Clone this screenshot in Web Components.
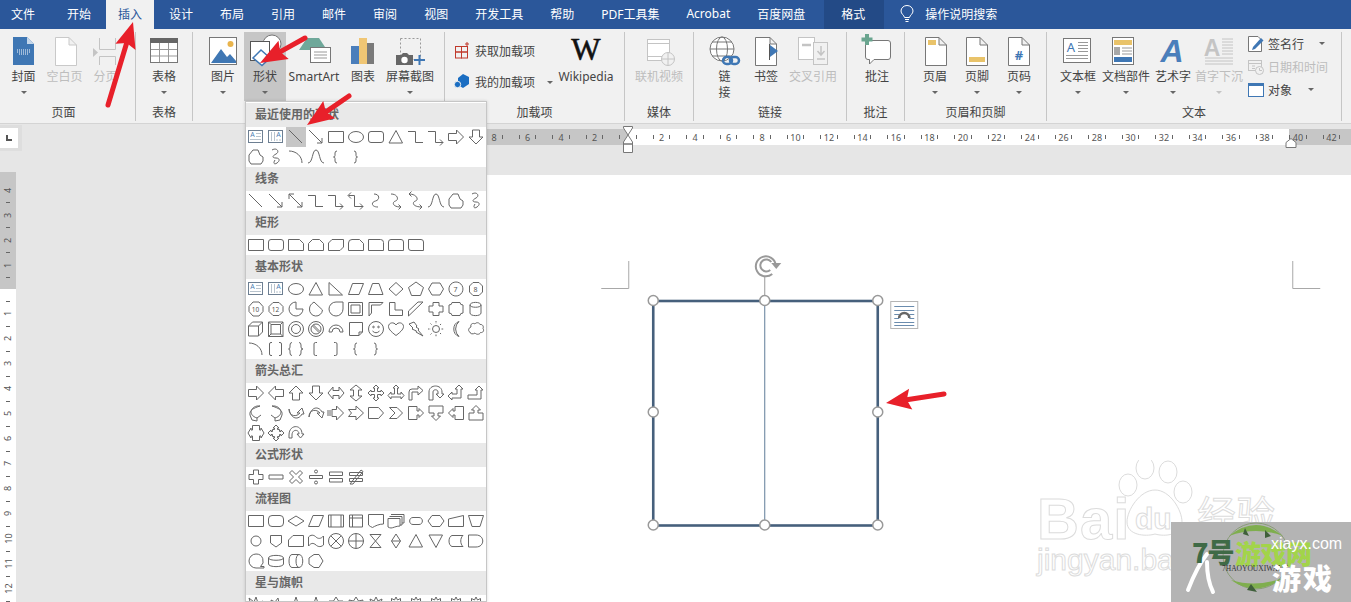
<!DOCTYPE html>
<html lang="zh">
<head>
<meta charset="utf-8">
<title>Word</title>
<style>
  html, body { margin: 0; padding: 0; }
  body { font-family: "Noto Sans", "Noto Sans CJK SC", sans-serif; font-size: 12px; }
</style>
</head>
<body>

<word-app>
  <tab-bar slot="tabs">
    <tab-item style="padding-right:17px;padding-left:11px">文件</tab-item>
    <tab-item>开始</tab-item>
    <tab-item active>插入</tab-item>
    <tab-item>设计</tab-item>
    <tab-item>布局</tab-item>
    <tab-item>引用</tab-item>
    <tab-item>邮件</tab-item>
    <tab-item>审阅</tab-item>
    <tab-item>视图</tab-item>
    <tab-item>开发工具</tab-item>
    <tab-item>帮助</tab-item>
    <tab-item>PDF工具集</tab-item>
    <tab-item>Acrobat</tab-item>
    <tab-item>百度网盘</tab-item>
    <tab-item context>格式</tab-item>
    <tell-me>操作说明搜索</tell-me>
  </tab-bar>

  <ribbon-bar slot="ribbon">
    <ribbon-group label="页面" style="width:136px;--pad:3px;--label-right:8px">
      <ribbon-button icon="cover" arrow style="width:41px">封面</ribbon-button>
      <ribbon-button icon="blank" disabled style="width:41px">空白页</ribbon-button>
      <ribbon-button icon="pagebreak" disabled style="width:41px">分页</ribbon-button>
    </ribbon-group>
    <ribbon-group label="表格" style="width:57px;--pad:6px">
      <ribbon-button icon="table" arrow style="width:44px">表格</ribbon-button>
    </ribbon-group>
    <ribbon-group style="width:252px;--pad:9px">
      <ribbon-button icon="picture" arrow style="width:42px">图片</ribbon-button>
      <ribbon-button icon="shapes" arrow pressed style="width:42px">形状</ribbon-button>
      <ribbon-button icon="smartart" style="width:56px">SmartArt</ribbon-button>
      <ribbon-button icon="chart" style="width:42px">图表</ribbon-button>
      <ribbon-button icon="screenshot" arrow style="width:52px">屏幕截图</ribbon-button>
    </ribbon-group>
    <ribbon-group label="加载项" style="width:180px;--pad:9px">
      <button-stack style="width:99px;gap:11px;padding-top:9px">
        <small-button icon="addin">获取加载项</small-button>
        <small-button icon="myaddin" arrow style="--caret:9px">我的加载项</small-button>
      </button-stack>
      <ribbon-button icon="wiki" style="width:66px">Wikipedia</ribbon-button>
    </ribbon-group>
    <ribbon-group label="媒体" style="width:69px;--pad:7px">
      <ribbon-button icon="video" disabled style="width:54px">联机视频</ribbon-button>
    </ribbon-group>
    <ribbon-group label="链接" style="width:153px;--pad:10px">
      <ribbon-button icon="link" style="width:41px">链<br>接</ribbon-button>
      <ribbon-button icon="bookmark" style="width:42px">书签</ribbon-button>
      <ribbon-button icon="crossref" disabled style="width:52px">交叉引用</ribbon-button>
    </ribbon-group>
    <ribbon-group label="批注" style="width:58px;--pad:8px">
      <ribbon-button icon="comment" style="width:44px">批注</ribbon-button>
    </ribbon-group>
    <ribbon-group label="页眉和页脚" style="width:142px;--pad:9px">
      <ribbon-button icon="header" arrow style="width:42px">页眉</ribbon-button>
      <ribbon-button icon="footer" arrow style="width:42px">页脚</ribbon-button>
      <ribbon-button icon="pagenum" arrow style="width:42px">页码</ribbon-button>
    </ribbon-group>
    <ribbon-group label="文本" style="width:295px;--pad:8px">
      <ribbon-button icon="textbox" arrow style="width:46px">文本框</ribbon-button>
      <ribbon-button icon="docpart" arrow style="width:50px">文档部件</ribbon-button>
      <ribbon-button icon="wordart" arrow style="width:44px">艺术字</ribbon-button>
      <ribbon-button icon="dropcap" arrow disabled style="width:48px">首字下沉</ribbon-button>
      <button-stack style="width:94px;margin-left:4px;gap:0">
        <small-button icon="signature" arrow tall style="--caret:12px">签名行</small-button>
        <small-button icon="datetime" disabled tall>日期和时间</small-button>
        <small-button icon="object" arrow tall style="--caret:13px">对象</small-button>
      </button-stack>
    </ribbon-group>
  </ribbon-bar>

  <doc-workspace slot="workspace"></doc-workspace>

  <shape-menu slot="overlay">
    <shape-section heading="最近使用的形状" selected="2" shapes="txt vtxt line arrow rect ellipse rrect tri elbow elbowA right down free scrib arcq wave lbrace rbrace"></shape-section>
    <shape-section heading="线条" shapes="line arrow dbl elbow elbowA elbowD curve curveA curveD wave free scrib"></shape-section>
    <shape-section heading="矩形" shapes="rect rrect snip1 snip2 snipd rsnip round1 round2 rounddiag"></shape-section>
    <shape-section heading="基本形状" shapes="txt vtxt ellipse tri rtri para trap diamond penta hexa n7 n8 n10 n12 pie tear teardrop frame halfframe lshape stripe cross plaque can cube bevel donut nosym blockarc fold smile heart bolt sun moon cloud arcq bracketp bracep lbrack rbrack lbrace rbrace"></shape-section>
    <shape-section heading="箭头总汇" shapes="right left up down lr ud quad lru bent uturn leftup bentup curveR curveL curveU curveDn striped notched home chevron calloutR calloutD calloutL calloutU calloutLR calloutQ circular"></shape-section>
    <shape-section heading="公式形状" shapes="plus minus times divide equal noteq"></shape-section>
    <shape-section heading="流程图" shapes="rect alt decision data predef internal doc multidoc term prep minput mop conn offpage card tape sumj orj collate sort extract merge stored delay seq disk direct display"></shape-section>
    <shape-section heading="星与旗帜" shapes="burst1 burst2 star4 star5 star6 star7 star8 star10 star12 star16 star24 star32"></shape-section>
  </shape-menu>

  <baidu-mark slot="overlay"></baidu-mark>
  <site-badge slot="overlay"></site-badge>
  <red-arrows slot="overlay"></red-arrows>
</word-app>

<script>
// ribbon icons, 42x34 box, centre of the button is x=21
const ICONS = {
  cover: `<path d="M10 5H24L31 12V33H10Z" fill="#3f77b4"/><path d="M24 5V12H31Z" fill="#c5d7ea"/><path d="M14 18H27M14 20H27M16 22H25" stroke="#fff" stroke-dasharray="1 1"/>`,
  blank: `<path d="M11.500 5.500H25L32.500 13V33.500H11.500ZM25 5.500V13H32.500" fill="#fff" stroke="#c9c9c9"/>`,
  pagebreak: `<g fill="none" stroke="#c4c4c4"><path d="M14.500 6V17.500H30.500V6M14.500 33V24.500H30.500V33"/></g><path d="M8 16L13 20.500L8 25Z" fill="#c4c4c4"/>`,
  table: `<rect x="7.500" y="6.500" width="27" height="24" fill="#fff" stroke="#777"/><rect x="7" y="6" width="28" height="5" fill="#666"/><path d="M16.500 11V30M25.500 11V30M8 17.500H34M8 24H34" stroke="#999" fill="none"/>`,
  picture: `<rect x="7.500" y="5.500" width="27" height="27" fill="#fff" stroke="#777"/><circle cx="28.500" cy="12" r="3" fill="#e9b44c"/><path d="M9 31L19 17L25 25L28 22L34 29V31Z" fill="#3f77b4"/>`,
  shapes: `<circle cx="28" cy="12" r="9" fill="#fff" stroke="#777"/><rect x="6.500" y="9.500" width="19" height="19" fill="#fff" stroke="#555"/><path d="M17 18L26 26L18 33.500L9 26Z" fill="#fff" stroke="#3f77b4" stroke-width="1.500"/>`,
  smartart: `<path d="M14 6H26L34 18H6Z" fill="#6fa89a"/><rect x="17.500" y="15.500" width="20" height="15" fill="#fff" stroke="#777"/><path d="M21 20H34M21 23H34M21 26H34" stroke="#999"/>`,
  chart: `<rect x="9" y="14" width="8" height="18" fill="#4a7ebb"/><rect x="17" y="6" width="8" height="26" fill="#f0c674"/><rect x="25" y="11" width="7" height="21" fill="#7a7a7a"/>`,
  screenshot: `<rect x="11.500" y="6.500" width="20" height="21" fill="none" stroke="#999" stroke-dasharray="2 2"/><path d="M7 23H12L14 21H18L20 23H24V33H7Z" fill="#666"/><circle cx="15.500" cy="28" r="3.200" fill="#fff"/><path d="M25 28H36M30.500 23V33" stroke="#3f77b4" stroke-width="2"/>`,
  wiki: `<text x="21" y="28" text-anchor="middle" font-family="Liberation Serif" font-size="31" font-weight="400" fill="#111" stroke="#111" stroke-width=".6">W</text>`,
  video: `<rect x="9.500" y="7.500" width="22" height="21" fill="#fff" stroke="#c4c4c4"/><path d="M9.500 11.500H31.500M9.500 24.500H31.500" stroke="#c4c4c4"/><circle cx="30" cy="27" r="6.500" fill="#f1f1f1" stroke="#c4c4c4"/><path d="M23.500 27H36.500M30 20.500V33.500" stroke="#c4c4c4"/>`,
  link: `<circle cx="18" cy="17" r="12" fill="#fff" stroke="#777"/><ellipse cx="18" cy="17" rx="5.500" ry="12" fill="none" stroke="#777"/><path d="M6 17H30M8 10H28M8 24H28" stroke="#777"/><rect x="19" y="25" width="9" height="7" rx="3.500" fill="none" stroke="#3f77b4" stroke-width="2.500"/><rect x="26" y="25" width="9" height="7" rx="3.500" fill="none" stroke="#3f77b4" stroke-width="2.500"/>`,
  bookmark: `<path d="M10.500 5.500H25L31.500 12V33.500H10.500ZM25 5.500V12H31.500" fill="#fff" stroke="#777"/><path d="M24.500 12V28" stroke="#555"/><path d="M25 13L33 19L25 25Z" fill="#3f77b4"/>`,
  crossref: `<rect x="6.500" y="5.500" width="16" height="22" fill="#fff" stroke="#c4c4c4"/><path d="M10 13H19" stroke="#c4c4c4" stroke-width="2.500"/><rect x="21.500" y="10.500" width="14" height="22" fill="#f1f1f1" stroke="#c4c4c4"/><path d="M29 14V22M25.500 19L29 23L32.500 19M25 27H33" stroke="#c4c4c4" stroke-width="1.500" fill="none"/>`,
  comment: `<path d="M9.500 8.500H32Q34.500 8.500 34.500 11V25Q34.500 27.500 32 27.500H18L13.500 32V27.500H12Q9.500 27.500 9.500 25Z" fill="#fff" stroke="#777"/><path d="M11 2V13M5.500 7.500H16.500" stroke="#6aa58f" stroke-width="4"/>`,
  header: `<path d="M11.500 5.500H25L32.500 13V33.500H11.500ZM25 5.500V13H32.500" fill="#fff" stroke="#777"/><rect x="14" y="8" width="8" height="5" fill="#e9c36a"/>`,
  footer: `<path d="M10.500 5.500H24L31.500 13V33.500H10.500ZM24 5.500V13H31.500" fill="#fff" stroke="#777"/><rect x="13" y="25" width="16" height="5" fill="#e9c36a"/>`,
  pagenum: `<path d="M10.500 5.500H24L31.500 13V33.500H10.500ZM24 5.500V13H31.500" fill="#fff" stroke="#777"/><text x="21" y="28" text-anchor="middle" font-size="13" font-weight="700" fill="#3f77b4">#</text>`,
  textbox: `<rect x="6.500" y="6.500" width="27" height="24" fill="#fff" stroke="#777"/><text x="14" y="20" text-anchor="middle" font-size="13" fill="#3f77b4">A</text><path d="M21 10.500H31M21 13.500H31M21 16.500H31M21 19.500H31M9 23.500H31M9 26.500H31" stroke="#999"/>`,
  docpart: `<rect x="7.500" y="5.500" width="21" height="27" fill="#fff" stroke="#777"/><rect x="9" y="8" width="18" height="5" fill="#e9c36a"/><rect x="9" y="15" width="6" height="8" fill="#a8a8a8"/><path d="M17 16H27M17 19H27M17 22H27" stroke="#999"/><rect x="9" y="25" width="18" height="5" fill="#3f77b4"/>`,
  wordart: `<text x="20" y="30" text-anchor="middle" font-family="Liberation Sans" font-style="italic" font-weight="700" font-size="32" fill="#4a7ebb">A</text>`,
  dropcap: `<text x="14" y="24" text-anchor="middle" font-family="Liberation Sans" font-weight="700" font-size="23" fill="#c4c4c4">A</text><path d="M24 7H35M24 10H35M24 13H35M24 16H35M24 19H35M24 22H35M7 26H35M7 29H35M7 32H35" stroke="#c4c4c4"/>`,
  addin: `<g fill="none" stroke="#c0392b"><rect x="1.500" y="4.500" width="6" height="5.500"/><rect x="7.500" y="4.500" width="6" height="5.500"/><rect x="1.500" y="10" width="6" height="6"/><rect x="7.500" y="10" width="6" height="6"/><path d="M13 0V4M11 2H15"/></g>`,
  myaddin: `<path d="M9 1L15 4V11L9 15L4 12V5Z" fill="#1b6ec2"/><circle cx="3.500" cy="11.500" r="3.200" fill="#1b6ec2" stroke="#f1f1f1"/>`,
  signature: `<path d="M1.500 1.500H11L14.500 5V16.500H1.500Z" fill="#fff" stroke="#777"/><path d="M6 12L14 3L16.500 5.500L8 14L5 15Z" fill="#3f77b4"/>`,
  datetime: `<rect x="1.500" y="2.500" width="13" height="10" fill="#f1f1f1" stroke="#c4c4c4"/><path d="M1.500 5.500H14.500M5 8H8M5 10.500H8" stroke="#c4c4c4"/><circle cx="12.500" cy="12.500" r="4" fill="#f1f1f1" stroke="#c4c4c4"/><path d="M12.500 10V12.500H15" fill="none" stroke="#c4c4c4"/>`,
  object: `<rect x="1.500" y="2.500" width="15" height="13" fill="#fff" stroke="#3f77b4"/><rect x="1" y="2" width="16" height="3" fill="#3f77b4"/>`
};

// shape gallery, 20x20 box. a string starting with < is raw svg, anything else a path
const num = (d, n) => `<path d="${d}"/><text x="9.500" y="12.500" text-anchor="middle" font-size="${n > 9 ? 6.500 : 7}" stroke="none" fill="#555">${n}</text>`;
const SHAPES = {
  txt: `<rect x="2.500" y="3.500" width="14" height="12" stroke="#6d7f92"/><text x="6.500" y="10" text-anchor="middle" font-size="7" stroke="none" fill="#4f7fb4">A</text><path d="M10 6.500H15M10 9.500H15M4 12.500H15" stroke="#9aa9b8" stroke-width=".7"/>`,
  vtxt: `<rect x="2.500" y="3.500" width="14" height="12" stroke="#6d7f92"/><text x="12.500" y="10" text-anchor="middle" font-size="7" stroke="none" fill="#4f7fb4">A</text><path d="M5.500 5V14M8.500 5V14M11 12V14M14 12V14" stroke="#9aa9b8" stroke-width=".7"/>`,
  line: 'M3 3L16 16',
  arrow: 'M3 3L16 16M16 11V16H11',
  dbl: 'M3 3L16 16M16 11V16H11M3 8V3H8',
  elbow: 'M2 4.500H9.500V15.500H17',
  elbowA: 'M2 4.500H9.500V15.500H17M14 12.500L17 15.500L14 18.500',
  elbowD: 'M2.500 4.500H8.500V15.500H17M5 1.500L2 4.500L5 7.500M14 12.500L17 15.500L14 18.500',
  curve: 'M8 3C14 3 14 9 9.500 10C5 11 5 16 12 16',
  curveA: 'M5 3C12 3 13 9 9.500 10C6 11 6 16 15 16M12.500 13.500L15 16L12.500 18.500',
  curveD: 'M3 3C11 3 13 9 9.500 10C6 11 6 16 16 16M5.500 .500L3 3L5.500 5.500M13.500 13.500L16 16L13.500 18.500',
  wave: 'M2 16C7 16 6 3 10 3S13 16 18 16',
  free: 'M3 8L7 3H12L14 8L17 10V14L15 17H5L3 14Z',
  scrib: 'M6 3C11 0 14 5 10 7S6 11 10 11 14 14 11 16 7 16 9 13',
  rect: 'M2.500 4.500H17.500V15.500H2.500Z',
  ellipse: `<ellipse cx="10" cy="10" rx="7.500" ry="5.500"/>`,
  rrect: 'M5 4.500H15Q17.500 4.500 17.500 7V13Q17.500 15.500 15 15.500H5Q2.500 15.500 2.500 13V7Q2.500 4.500 5 4.500Z',
  snip1: 'M2.500 4.500H13.500L17.500 8.500V15.500H2.500Z',
  snip2: 'M6.500 4.500H13.500L17.500 8.500V15.500H2.500V8.500Z',
  snipd: 'M6 4.500H17.500V12L14 15.500H2.500V8Z',
  rsnip: 'M6 4.500H13.500L17.500 8.500V15.500H2.500V8Q2.500 4.500 6 4.500Z',
  round1: 'M2.500 4.500H14.500Q17.500 4.500 17.500 7.500V15.500H2.500Z',
  round2: 'M5 4.500H15Q17.500 4.500 17.500 7V15.500H2.500V7Q2.500 4.500 5 4.500Z',
  rounddiag: 'M2.500 4.500H15Q17.500 4.500 17.500 7V15.500H5Q2.500 15.500 2.500 13Z',
  tri: 'M10 3.500L16.500 16H3Z',
  rtri: 'M3 3.500V16H16.500Z',
  para: 'M6.500 4.500H17.500L13 15.500H2.500Z',
  trap: 'M6.500 4.500H13L17 15.500H2.500Z',
  diamond: 'M10 3.500L17 10L10 16.500L3 10Z',
  penta: 'M10 3L17.500 8.500L14.500 16.500H5.500L2.500 8.500Z',
  hexa: 'M6 4H14L17.500 10L14 16H6L2.500 10Z',
  n7: num('M10 3A7 7 0 1 1 9.900 3Z', 7),
  n8: num('M7 3.500H13L16.500 7V13L13 16.500H7L3.500 13V7Z', 8),
  n10: num('M7 3H13L17 7.500V12.500L13 17H7L3 12.500V7.500Z', 10),
  n12: num('M7 3.500H13L17 7.500V12.500L13 16.500H7L3 12.500V7.500Z', 12),
  pie: 'M10 3A7 7 0 1 0 17 10H10Z',
  tear: 'M8 3L16.500 11A6.500 6.500 0 1 1 3.500 10C3.500 7 5 5 8 3Z',
  teardrop: 'M17 3V10A7 7 0 1 1 10 3Z',
  frame: 'M2.500 3.500H16.500V16.500H2.500ZM5 6H14V14H5Z',
  halfframe: 'M3 3.500H17L14.500 6H5.500V14L3 17Z',
  lshape: 'M3.500 3.500H9V11H16.500V16.500H3.500Z',
  stripe: 'M2.500 12L12 3H17L2.500 17Z',
  cross: 'M7 3.500H13V7H17V13H13V16.500H7V13H3V7H7Z',
  plaque: 'M6 3.500H14Q14 6 17 6V14Q14 14 14 16.500H6Q6 14 3 14V6Q6 6 6 3.500Z',
  can: 'M4 6C4 2.500 15 2.500 15 6V14C15 17.500 4 17.500 4 14ZM4 6C4 9 15 9 15 6',
  cube: 'M2.500 7L6.500 3H16.500V13L12.500 17H2.500ZM2.500 7H12.500V17M12.500 7L16.500 3',
  bevel: 'M2.500 3H17V17.500H2.500ZM5 5.500H14.500V15H5ZM2.500 3L5 5.500M17 3L14.500 5.500M2.500 17.500L5 15M17 17.500L14.500 15',
  donut: `<circle cx="10" cy="10" r="7.500"/><circle cx="10" cy="10" r="4.500"/>`,
  nosym: `<circle cx="10" cy="10" r="7.500"/><circle cx="10" cy="10" r="5"/><path d="M6.500 7L13 13.500M7.500 6L14 12.500"/>`,
  blockarc: 'M3 13A7 7 0 0 1 17 13H14A4 4 0 0 0 6 13Z',
  fold: 'M3.500 3.500H16.500V13L13 16.500H3.500ZM13 16.500V13H16.500',
  smile: `<circle cx="10" cy="10" r="7.500"/><circle cx="7.500" cy="8" r=".8"/><circle cx="12.500" cy="8" r=".8"/><path d="M6.500 12Q10 15.500 13.500 12"/>`,
  heart: 'M10 16.500C4 12 2.500 9.500 2.500 7.500C2.500 3.500 8 2.500 10 6C12 2.500 17.500 3.500 17.500 7.500C17.500 9.500 16 12 10 16.500Z',
  bolt: 'M3 5L8 3L11 7L10 8L13 10L12 11L17 17L10 13L10.500 12L6 10L7 9Z',
  sun: `<circle cx="10" cy="10" r="3.500"/><path d="M10 2V4.500M10 15.500V18M2 10H4.500M15.500 10H18M4.500 4.500L6 6M14 14L15.500 15.500M4.500 15.500L6 14M14 6L15.500 4.500" stroke-dasharray="1.500 .8"/>`,
  moon: 'M13 2.500A8 8 0 0 0 13 17.500A10 10 0 0 1 13 2.500Z',
  cloud: 'M5 8C4 5 7 3.500 9 5C10 3 13.500 3.500 14 5.500C16.500 5 18 7.500 17 9.500C18.500 11.500 17 14 14.500 13.500C13.500 16 10 15.500 9 14C7 15.500 4 15 4 13C2 12.500 2 9 5 8Z',
  arcq: 'M3 4C10 4 16 9 16 16',
  bracketp: 'M6 3.500H5Q3.500 3.500 3.500 5V15Q3.500 16.500 5 16.500H6M13 3.500H14Q15.500 3.500 15.500 5V15Q15.500 16.500 14 16.500H13',
  bracep: 'M6 3.500Q4 3.500 4 6V8Q4 10 2.500 10Q4 10 4 12V14Q4 16.500 6 16.500M13 3.500Q15 3.500 15 6V8Q15 10 17 10Q15 10 15 12V14Q15 16.500 13 16.500',
  lbrack: 'M11 3.500H9.500Q8 3.500 8 5V15Q8 16.500 9.500 16.500H11',
  rbrack: 'M8 3.500H9.500Q11 3.500 11 5V15Q11 16.500 9.500 16.500H8',
  lbrace: 'M11 4Q9 4 9 6V8.500Q9 10 7.500 10Q9 10 9 11.500V14Q9 16 11 16',
  rbrace: 'M8 4Q10 4 10 6V8.500Q10 10 11.500 10Q10 10 10 11.500V14Q10 16 8 16',
  right: 'M2.500 6.500H10.500V3L17.500 10L10.500 17V13.500H2.500Z',
  left: 'M17.500 6.500H9.500V3L2.500 10L9.500 17V13.500H17.500Z',
  up: 'M6.500 17V10H3L10 3L17 10H13.500V17Z',
  down: 'M6.500 3V10H3L10 17L17 10H13.500V3Z',
  lr: 'M2 10L7 4V7.500H13V4L18 10L13 16V12.500H7V16Z',
  ud: 'M10 2L16 7H12.500V13H16L10 18L4 13H7.500V7H4Z',
  quad: 'M10 2L13 5H11.500V8.500H15V7L18 10L15 13V11.500H11.500V15H13L10 18L7 15H8.500V11.500H5V13L2 10L5 7V8.500H8.500V5H7Z',
  lru: 'M10 2L13 5H11.500V11H15V9L18 12.500L15 16V14H5V16L2 12.500L5 9V11H8.500V5H7Z',
  bent: 'M3 17V9Q3 6 6 6H12V3L17 7.500L12 12V9H6V17Z',
  uturn: 'M3 17V9C3 1 16 1 16 9V11H18L14 15L10 11H12V9C12 6 7 6 7 9V17Z',
  leftup: 'M2 13L6 9V11H11V6H9L13 2L17 6H15V15H6V17Z',
  bentup: 'M2 12H11V7H9L13 3L17 7H15V16H2Z',
  curveR: 'M14 3C5 2 1 12 11 15V18L6 17L4 12C3 7 8 5 14 3ZM11 15L15 12',
  curveL: 'M6 3C15 2 19 12 9 15V18L14 17L16 12C17 7 12 5 6 3ZM9 15L5 12',
  curveU: 'M3 6C3 14 11 14 14 10H11L16 5L18 11L16 11C13 17 5 17 3 6Z',
  curveDn: 'M3 14C3 6 11 6 14 10H11L16 15L18 9L16 9C13 3 5 3 3 14Z',
  striped: 'M2 7V13M4 7V13M6 6.500H10.500V3L17.500 10L10.500 17V13.500H6Z',
  notched: 'M2.500 6.500H10V3L17.500 10L10 17V13.500H2.500L5.500 10Z',
  home: 'M2.500 4.500H12.500L17.500 10L12.500 15.500H2.500Z',
  chevron: 'M3.500 4.500H11L16.500 10L11 15.500H3.500L9 10Z',
  calloutR: 'M2.500 3.500H11V8H13V5.500L17.500 10L13 14.500V12H11V16.500H2.500Z',
  calloutD: 'M3 3H17V10H12V13H14.500L10 17.500L5.500 13H8V10H3Z',
  calloutL: 'M17.500 3.500H9V8H7V5.500L2.500 10L7 14.500V12H9V16.500H17.500Z',
  calloutU: 'M3 17H17V10H12V7H14.500L10 2.500L5.500 7H8V10H3Z',
  calloutLR: 'M6.500 2.500H13.500V7H15V5L18 10L15 15V13H13.500V17.500H6.500V13H5V15L2 10L5 5V7H6.500Z',
  calloutQ: 'M10 2L13 5H11.500V6.500H13.500V8.500H15V7L18 10L15 13V11.500H13.500V13.500H11.500V15H13L10 18L7 15H8.500V13.500H6.500V11.500H5V13L2 10L5 7V8.500H6.500V6.500H8.500V5H7Z',
  circular: 'M3 12C3 1 16 1 16 11H18L14.500 15L11 11H13C13 6 6 6 6 12V15H3Z',
  plus: 'M7.500 3H12.500V7.500H17V12.500H12.500V17H7.500V12.500H3V7.500H7.500Z',
  minus: 'M3 8H17V12H3Z',
  times: 'M6 3.500L10 7.500L14 3.500L16.500 6L12.500 10L16.500 14L14 16.500L10 12.500L6 16.500L3.500 14L7.500 10L3.500 6Z',
  divide: `<circle cx="10" cy="4.500" r="1.500"/><circle cx="10" cy="15.500" r="1.500"/><path d="M3.500 8.500H16.500V11.500H3.500Z"/>`,
  equal: 'M3.500 5H16.500V8.500H3.500ZM3.500 11.500H16.500V15H3.500Z',
  noteq: 'M3.500 5.500H16.500V8.500H3.500ZM3.500 11.500H16.500V14.500H3.500ZM4 17L15 3L17 4.500L7 17Z',
  alt: 'M6 4.500H14Q17.500 4.500 17.500 8V12Q17.500 15.500 14 15.500H6Q2.500 15.500 2.500 12V8Q2.500 4.500 6 4.500Z',
  decision: 'M10 5L18 10L10 15L2 10Z',
  data: 'M7 4.500H17.500L13 15.500H2.500Z',
  predef: 'M2.500 4H17.500V16H2.500ZM5 4V16M15 4V16',
  internal: 'M3.500 4H16.500V16H3.500ZM6.500 4V16M3.500 7H16.500',
  doc: 'M2.500 3.500H17.500V13C13 13 9 15 6.500 16.500C5 16 3.500 15 2.500 14Z',
  multidoc: 'M5 3.500H18V12H16M3.500 5.500H16V14H14M2 7.500H14V15C10 15 7 17 5 17C4 17 3 16.500 2 16Z',
  term: 'M7 6.500H13C17.500 6.500 17.500 13.500 13 13.500H7C2.500 13.500 2.500 6.500 7 6.500Z',
  prep: 'M6 4.500H14L18 10L14 15.500H6L2 10Z',
  minput: 'M2.500 8L17.500 4.500V15.500H2.500Z',
  mop: 'M2.500 4.500H17.500L14 15.500H6Z',
  conn: `<circle cx="10" cy="10" r="5"/>`,
  offpage: 'M4.500 4.500H15.500V12L10 16L4.500 12Z',
  card: 'M7 4.500H17.500V15.500H2.500V9Z',
  tape: 'M2.500 6C6 2.500 9 5 10 6C12 8 15 8 17.500 5V14C14 17 11 15 10 14C7 11.500 5 12 2.500 15Z',
  sumj: `<circle cx="10" cy="10" r="7.500"/><path d="M4.700 4.700L15.300 15.300M15.300 4.700L4.700 15.300"/>`,
  orj: `<circle cx="10" cy="10" r="7.500"/><path d="M2.500 10H17.500M10 2.500V17.500"/>`,
  collate: 'M4 3.500H15L4 16.500H15Z',
  sort: 'M10 3L14.500 10L10 17L5.500 10ZM5.500 10H14.500',
  extract: 'M10 3.500L16.500 16H3Z',
  merge: 'M3 4H16.500L10 16.500Z',
  stored: 'M6 4.500H17C14 7 14 13 17 15.500H6C2 14.500 2 5.500 6 4.500Z',
  delay: 'M2.500 4H10C19 4 19 16 10 16H2.500Z',
  seq: 'M10 3A7 7 0 1 0 10 17H18V15.500H14.500A7 7 0 0 0 10 3Z',
  disk: 'M2.500 7C2.500 3.500 17.500 3.500 17.500 7V13C17.500 16.500 2.500 16.500 2.500 13ZM2.500 7C2.500 10 17.500 10 17.500 7',
  direct: 'M6 3.500H13C18 3.500 18 16.500 13 16.500H6C2 16.500 2 3.500 6 3.500ZM13 3.500C9 3.500 9 16.500 13 16.500',
  display: 'M8 3.500H13L17 10L13 16.500H8L3 13V7Z',
  burst1: 'M3 3L8 7L10 2L12 8L17 6L14 11L18 15L12 15L10 20L7 15L3 16L5 10Z',
  burst2: 'M5 5L9 7L12 3L13 8L18 8L14 12L17 18L11 15L7 19L7 14L2 12L6 9Z',
  star4: 'M10 2L12 8L18 10L12 12L10 18L8 12L2 10L8 8Z',
  star5: 'M10 2L12 8H18L13 12L15 18L10 14L5 18L7 12L2 8H8Z',
  star6: 'M10 2L12.500 6H17L14.500 10L17 14H12.500L10 18L7.500 14H3L5.500 10L3 6H7.500Z',
  star7: 'M10 2L12.500 6L17 5L15.500 10L18 14L13 14L10 18L7 14L2 14L4.500 10L3 5L7.500 6Z',
  star8: 'M10 2L12 6L16 4L15 8L18 10L15 12L16 16L12 14L10 18L8 14L4 16L5 12L2 10L5 8L4 4L8 6Z',
  star10: 'M10 2L11.500 5L14.500 3.500L14.500 7L18 7L16 10L18 13L14.500 13L14.500 16.500L11.500 15L10 18L8.500 15L5.500 16.500L5.500 13L2 13L4 10L2 7L5.500 7L5.500 3.500L8.500 5Z'
};
SHAPES.star12 = SHAPES.star16 = SHAPES.star24 = SHAPES.star32 = SHAPES.star10;

const shapeMarkup = key => {
  const s = SHAPES[key] || '';
  return s.startsWith('<') ? s : `<path d="${s}"/>`;
};

class WordApp extends HTMLElement {
  constructor() {
    super();
    this.attachShadow({ mode: 'open' });
    this.shadowRoot.innerHTML = `
      <style>
        :host { display: flex; flex-direction: column; position: relative; width: 1351px; height: 602px; overflow: hidden; background: #e6e6e6; color: #444; }
      </style>
      <slot name="tabs"></slot>
      <slot name="ribbon"></slot>
      <slot name="workspace"></slot>
      <slot name="overlay"></slot>
    `;
  }
}

class TabBar extends HTMLElement {
  constructor() {
    super();
    this.attachShadow({ mode: 'open' });
    this.shadowRoot.innerHTML = `
      <style>
        :host { display: flex; gap: 3px; height: 29px; background: #2b579a; flex: none; }
      </style>
      <slot></slot>
    `;
  }
}

class TabItem extends HTMLElement {
  constructor() {
    super();
    this.attachShadow({ mode: 'open' });
    this.shadowRoot.innerHTML = `
      <style>
        :host { display: flex; align-items: center; height: 29px; padding: 0 12px 2px; box-sizing: border-box; color: #fff; font-size: 12px; white-space: nowrap; }
        :host([active]) { background: #f1f1f1; color: #2b579a; }
        :host([context]) { background: #234a86; margin-left: 4px; padding: 0 19px 2px 17px; }
      </style>
      <slot></slot>
    `;
  }
}

class TellMe extends HTMLElement {
  constructor() {
    super();
    this.attachShadow({ mode: 'open' });
    this.shadowRoot.innerHTML = `
      <style>
        :host { display: flex; align-items: center; gap: 11px; margin-left: 13px; padding-bottom: 2px; color: #fff; font-size: 12px; white-space: nowrap; }
      </style>
      <svg width="14" height="18" viewBox="0 0 14 18" fill="none" stroke="#fff"><path d="M4.500 12.500C4 10 1 9 1 6A6 5.500 0 0 1 13 6C13 9 10 10 9.500 12.500ZM5 14.500H9M5.500 16.500H8.500"/></svg>
      <slot></slot>
    `;
  }
}

class RibbonBar extends HTMLElement {
  constructor() {
    super();
    this.attachShadow({ mode: 'open' });
    this.shadowRoot.innerHTML = `
      <style>
        :host { display: flex; flex: none; box-sizing: border-box; height: 95px; padding-top: 3px; background: #f1f1f1; border-bottom: 1px solid #d4d4d4; }
      </style>
      <slot></slot>
    `;
  }
}

class RibbonGroup extends HTMLElement {
  constructor() {
    super();
    this.attachShadow({ mode: 'open' });
    this.shadowRoot.innerHTML = `
      <style>
        :host { display: flex; flex-direction: column; flex: none; box-sizing: border-box; height: 89px; border-right: 1px solid #c6c6c6; }
        .items { display: flex; height: 73px; padding-left: var(--pad, 0); }
        .label { height: 16px; line-height: 16px; padding-right: var(--label-right, 0); text-align: center; font-size: 12px; color: #444; }
      </style>
      <div class="items"><slot></slot></div>
      <div class="label"></div>
    `;
    this.shadowRoot.querySelector('.label').textContent = this.getAttribute('label') || '';
  }
}

class RibbonButton extends HTMLElement {
  constructor() {
    super();
    this.attachShadow({ mode: 'open' });
    const caret = this.hasAttribute('arrow') ? '<i class="caret"></i>' : '';
    this.shadowRoot.innerHTML = `
      <style>
        :host { display: flex; flex-direction: column; align-items: center; flex: none; height: 69px; color: #444; font-size: 12px; }
        :host([disabled]) { color: #bdbdbd; }
        :host([pressed]) { background: #c6c6c6; }
        svg { display: block; flex: none; overflow: visible; }
        .text { height: 16px; line-height: 16px; margin-top: 3px; text-align: center; white-space: nowrap; }
        .caret { width: 0; height: 0; margin-top: 6px; border: 3px solid transparent; border-top: 3px solid #666; border-bottom: 0; }
        :host([disabled]) .caret { border-top-color: #c4c4c4; }
      </style>
      <svg width="42" height="34" viewBox="0 0 42 34">${ICONS[this.getAttribute('icon')] || ''}</svg>
      <div class="text"><slot></slot></div>
      ${caret}
    `;
  }
}

class ButtonStack extends HTMLElement {
  constructor() {
    super();
    this.attachShadow({ mode: 'open' });
    this.shadowRoot.innerHTML = `
      <style>
        :host { display: flex; flex-direction: column; flex: none; box-sizing: border-box; }
      </style>
      <slot></slot>
    `;
  }
}

class SmallButton extends HTMLElement {
  constructor() {
    super();
    this.attachShadow({ mode: 'open' });
    const caret = this.hasAttribute('arrow') ? '<i class="caret"></i>' : '';
    this.shadowRoot.innerHTML = `
      <style>
        :host { display: flex; align-items: center; height: 20px; gap: 3px; color: #444; font-size: 12px; white-space: nowrap; }
        :host([tall]) { height: 23px; }
        :host([disabled]) { color: #bdbdbd; }
        svg { display: block; flex: none; }
        .caret { width: 0; height: 0; margin-left: var(--caret, 9px); border: 3px solid transparent; border-top: 3px solid #666; border-bottom: 0; }
      </style>
      <svg width="18" height="18" viewBox="0 0 18 18">${ICONS[this.getAttribute('icon')] || ''}</svg>
      <span><slot></slot></span>
      ${caret}
    `;
  }
}

class DocWorkspace extends HTMLElement {
  constructor() {
    super();
    this.attachShadow({ mode: 'open' });
    this.shadowRoot.innerHTML = `
      <style>
        :host { display: grid; flex: 1; min-height: 0; grid-template-columns: 309.750px 1fr; grid-template-rows: 51px 1fr; background: #e6e6e6; }
        .gutter { grid-row: 1 / 3; display: flex; flex-direction: column; min-height: 0; overflow: hidden; }
        .top { padding-top: 5px; }
      </style>
      <div class="gutter">
        <tab-selector></tab-selector>
        <v-ruler></v-ruler>
      </div>
      <div class="top"><h-ruler></h-ruler></div>
      <doc-page></doc-page>
    `;
  }
}

class TabSelector extends HTMLElement {
  constructor() {
    super();
    this.attachShadow({ mode: 'open' });
    this.shadowRoot.innerHTML = `
      <style>
        :host { display: block; flex: none; box-sizing: border-box; width: 22px; height: 26px; margin: 1px 0 21px; padding: 3px 4px 3px 0; background: #dedede; }
        .inner { display: flex; align-items: center; justify-content: center; height: 100%; background: #fff; }
      </style>
      <div class="inner"><svg width="6" height="6" viewBox="0 0 6 6"><path d="M1 0V5H6" fill="none" stroke="#555" stroke-width="2"/></svg></div>
    `;
  }
}

class HRuler extends HTMLElement {
  constructor() {
    super();
    this.attachShadow({ mode: 'open' });
    let cells = '';
    for (let n = -18; n <= 42; n += 2) {
      cells += `<span class="cell"><i></i><b>${n === 0 ? '' : Math.abs(n)}</b><i></i></span>`;
    }
    this.shadowRoot.innerHTML = `
      <style>
        :host { display: block; position: relative; height: 16px; background: linear-gradient(90deg, #c6c6c6 318px, #fff 318px, #fff 979px, #c6c6c6 979px); overflow: visible; }
        .track { display: flex; height: 16px; overflow: hidden; }
        .cell { display: flex; flex: none; align-items: center; justify-content: space-between; box-sizing: border-box; width: 33.500px; padding: 0 8px; }
        i { width: 1px; height: 4px; background: #666; }
        b { font: 400 9px "Noto Sans", sans-serif; color: #555; }
        /* the markers lie over the ruler */
        svg { position: absolute; }
      </style>
      <div class="track">${cells}</div>
      <svg style="left:312px;top:-3px" width="12" height="28" viewBox="0 0 12 28"><path d="M1.500 .500H10.500V2L6 9L1.500 2ZM1.500 18V16L6 9L10.500 16V18ZM1.500 18H10.500V26.500H1.500Z" fill="#fff" stroke="#777"/></svg>
      <svg style="left:975px;top:9px" width="12" height="10" viewBox="0 0 12 10"><path d="M1 9.500V4.500L6 .500L11 4.500V9.500Z" fill="#fff" stroke="#777"/></svg>
    `;
  }
}

class VRuler extends HTMLElement {
  constructor() {
    super();
    this.attachShadow({ mode: 'open' });
    const cell = (n, tick) => tick ? '<span class="c"><i></i></span>' : `<span class="c"><b>${n}</b></span>`;
    let up = '', down = '';
    for (let n = 4; n >= 1; n--) up += cell(n) + cell(0, true);
    for (let n = 1; n <= 12; n++) down += cell(0, true) + cell(n);
    down += cell(0, true);
    this.shadowRoot.innerHTML = `
      <style>
        :host { display: flex; flex-direction: column; flex: none; width: 16px; height: 440px; background: #fff; }
        .top { background: #c6c6c6; height: 117px; padding-top: 12px; box-sizing: border-box; flex: none; }
        .bottom { padding-top: 6px; }
        .c { display: flex; align-items: center; justify-content: center; height: 12.500px; }
        i { width: 4px; height: 1px; background: #666; }
        b { font: 400 9px "Noto Sans", sans-serif; color: #555; transform: rotate(-90deg); }
      </style>
      <div class="top">${up}</div>
      <div class="bottom">${down}</div>
    `;
  }
}

class DocPage extends HTMLElement {
  constructor() {
    super();
    this.attachShadow({ mode: 'open' });
    const handle = (x, y) => `<circle cx="${x}" cy="${y}" r="5"/>`;
    const handles = [[653, 300.5], [764.5, 300.5], [877.5, 300.5], [653, 412], [877.5, 412], [653, 525], [764.5, 525], [877.5, 525]];
    this.shadowRoot.innerHTML = `
      <style>
        :host { display: block; position: relative; background: #fff; min-height: 0; }
        /* free canvas, coordinates are the ones of the window */
        svg { position: absolute; left: 0; top: 0; }
      </style>
      <svg width="1041.250" height="427" viewBox="309.750 175 1041.250 427" fill="none">
        <path d="M601 288.500H628.500V261M1320 288.500H1292.500V261" stroke="#a8a8a8"/>
        <path d="M764.500 276V296" stroke="#999"/>
        <rect x="653" y="301" width="224.500" height="224.500" stroke="#46607c" stroke-width="2.600"/>
        <path d="M764.500 301V525" stroke="#5f7d99"/>
        <g fill="#fff" stroke="#999" stroke-width="1.500">${handles.map(h => handle(h[0], h[1])).join('')}</g>
        <g stroke="#999" stroke-width="2"><path d="M772 274A10 10 0 1 1 775.500 265"/><path d="M770 270A6 6 0 1 1 771 262"/></g>
        <path d="M771 263H781L776 269Z" fill="#999"/>
        <rect x="890.500" y="301.500" width="27" height="27" fill="#fff" stroke="#b5b5b5"/>
        <path d="M894 306.500H914M894 310.500H914M894 314.500H899M909 314.500H914M894 318.500H899M909 318.500H914M894 322.500H914M894 325.500H914" stroke="#6b8cae"/>
        <path d="M899 318A5 5 0 0 1 909 318" stroke="#666" stroke-width="2.500"/>
      </svg>
    `;
  }
}

class ShapeMenu extends HTMLElement {
  constructor() {
    super();
    this.attachShadow({ mode: 'open' });
    this.shadowRoot.innerHTML = `
      <style>
        :host { display: block; position: absolute; left: 245px; top: 101px; box-sizing: border-box; width: 242px; height: 501px; padding-top: 1px; overflow: hidden; background: #fff; border: 1px solid #c6c6c6; box-shadow: 0 0 3px rgba(0,0,0,.15); }
      </style>
      <slot></slot>
    `;
  }
}

class ShapeSection extends HTMLElement {
  constructor() {
    super();
    this.attachShadow({ mode: 'open' });
    const selected = this.getAttribute('selected');
    const cells = this.getAttribute('shapes').split(' ').map((k, i) =>
      `<span class="cell${String(i) === selected ? ' on' : ''}"><svg width="20" height="20" viewBox="0 0 20 20">${shapeMarkup(k)}</svg></span>`).join('');
    this.shadowRoot.innerHTML = `
      <style>
        :host { display: block; }
        .head { height: 24px; line-height: 23px; padding-left: 9px; background: #e9e9e9; color: #666; font-size: 12px; font-weight: 700; }
        .grid { display: grid; grid-template-columns: repeat(12, 20px); grid-auto-rows: 20px; }
        .cell { display: block; width: 20px; height: 20px; }
        .on { background: #c6c6c6; }
        svg { display: block; fill: none; stroke: #666; stroke-width: 1; }
      </style>
      <div class="head"></div>
      <div class="grid">${cells}</div>
    `;
    this.shadowRoot.querySelector('.head').textContent = this.getAttribute('heading');
  }
}

class BaiduMark extends HTMLElement {
  constructor() {
    super();
    this.attachShadow({ mode: 'open' });
    this.shadowRoot.innerHTML = `
      <style>
        :host { display: block; position: absolute; left: 1030px; top: 460px; width: 321px; height: 142px; color: #fff; font-family: "Liberation Sans", sans-serif; }
        span { position: absolute; white-space: nowrap; -webkit-text-stroke: 1px #dcdcdc; line-height: 1; }
        svg { position: absolute; left: 0; top: 0; }
      </style>
      <svg width="321" height="142" fill="#fff" stroke="#dcdcdc">
        <ellipse cx="115" cy="8" rx="9" ry="11"/><ellipse cx="138" cy="12" rx="9" ry="11"/><ellipse cx="98" cy="25" rx="9" ry="11"/><ellipse cx="153" cy="32" rx="9" ry="11"/>
        <path d="M125 30C140 30 152 50 152 62C152 75 135 77 125 74C115 77 97 75 97 62C97 50 110 30 125 30Z"/>
      </svg>
      <span style="left:7px;top:30px;font-size:58px;font-weight:700;letter-spacing:1px">Bai</span>
      <span style="left:105px;top:44px;font-size:30px;font-weight:700">du</span>
      <span style="left:167px;top:33px;font-size:39px;font-family:'Noto Sans CJK SC',sans-serif">经验</span>
      <span style="left:7px;top:85px;font-size:30px">jingyan.baidu.com</span>
    `;
  }
}

class SiteBadge extends HTMLElement {
  constructor() {
    super();
    this.attachShadow({ mode: 'open' });
    this.shadowRoot.innerHTML = `
      <style>
        :host { display: block; position: absolute; left: 1171px; top: 522px; width: 180px; height: 80px; background: #b4b4b4; overflow: hidden; font-family: "Noto Sans CJK SC", sans-serif; }
        span { position: absolute; white-space: nowrap; line-height: 1; }
        svg { position: absolute; left: 0; top: 0; }
      </style>
      <svg width="180" height="80" fill="none">
        <circle cx="85" cy="34" r="33" stroke="#8a9c78"/>
        <path d="M58 14Q85 -8 112 14Q85 4 58 14Z" fill="#7fae4e"/>
        <path d="M60 58Q85 76 112 56Q85 66 60 58Z" fill="#7fae4e"/>
        <path d="M74 6L78 14L72 12Z M94 8L100 14L94 16Z M80 62L86 70L76 68Z" fill="#3f5f3a"/>
        <path d="M36 32C28 42 22 55 17 68M36 40C36 52 38 62 42 70" stroke="#fff" stroke-width="4" stroke-linecap="round"/>
      </svg>
      <span style="left:21px;top:16px;font-size:27px;font-weight:900;color:#3f6a46;letter-spacing:-1px">7号</span>
      <span style="left:64px;top:18px;font-size:26px;font-weight:900;color:#a2d44a;letter-spacing:-.5px">游戏网</span>
      <span style="left:100px;top:14px;font-size:16px;color:#fff;font-family:'Liberation Sans',sans-serif;font-weight:400">xiayx.com</span>
      <span style="left:51px;top:43px;font-size:7.500px;color:#333;font-family:'Liberation Serif',serif">7HAOYOUXIWANG</span>
      <span style="left:101px;top:41px;font-size:29px;font-weight:900;color:#fff;letter-spacing:2px">游戏</span>
    `;
  }
}

class RedArrows extends HTMLElement {
  constructor() {
    super();
    this.attachShadow({ mode: 'open' });
    // tail x,y then tip x,y, head length, head width
    const list = [
      [108, 105, 133, 22, 26, 21],
      [305, 38, 260, 63, 27, 21],
      [349, 96, 307, 125, 27, 21],
      [944, 394, 886, 403, 25, 21]
    ];
    const draw = ([x1, y1, x2, y2, hl, hw]) => {
      const len = Math.hypot(x2 - x1, y2 - y1);
      const ux = (x2 - x1) / len, uy = (y2 - y1) / len;
      const bx = x2 - ux * hl, by = y2 - uy * hl;
      const nx = -uy, ny = ux;
      const nb = [bx + ux * 4, by + uy * 4];
      return `<path d="M${x1} ${y1}L${nb[0]} ${nb[1]}" stroke="#e8202a" stroke-width="5" stroke-linecap="round"/>
        <path d="M${x2} ${y2}L${bx + nx * hw / 2} ${by + ny * hw / 2}L${nb[0]} ${nb[1]}L${bx - nx * hw / 2} ${by - ny * hw / 2}Z" fill="#e8202a"/>`;
    };
    this.shadowRoot.innerHTML = `
      <style>
        :host { display: block; position: absolute; left: 0; top: 0; width: 1351px; height: 602px; pointer-events: none; }
      </style>
      <svg width="1351" height="602">${list.map(draw).join('')}</svg>
    `;
  }
}

customElements.define('tab-item', TabItem);
customElements.define('tell-me', TellMe);
customElements.define('tab-bar', TabBar);
customElements.define('ribbon-button', RibbonButton);
customElements.define('small-button', SmallButton);
customElements.define('button-stack', ButtonStack);
customElements.define('ribbon-group', RibbonGroup);
customElements.define('ribbon-bar', RibbonBar);
customElements.define('tab-selector', TabSelector);
customElements.define('h-ruler', HRuler);
customElements.define('v-ruler', VRuler);
customElements.define('doc-page', DocPage);
customElements.define('doc-workspace', DocWorkspace);
customElements.define('shape-section', ShapeSection);
customElements.define('shape-menu', ShapeMenu);
customElements.define('baidu-mark', BaiduMark);
customElements.define('site-badge', SiteBadge);
customElements.define('red-arrows', RedArrows);
customElements.define('word-app', WordApp);
</script>
</body>
</html>
